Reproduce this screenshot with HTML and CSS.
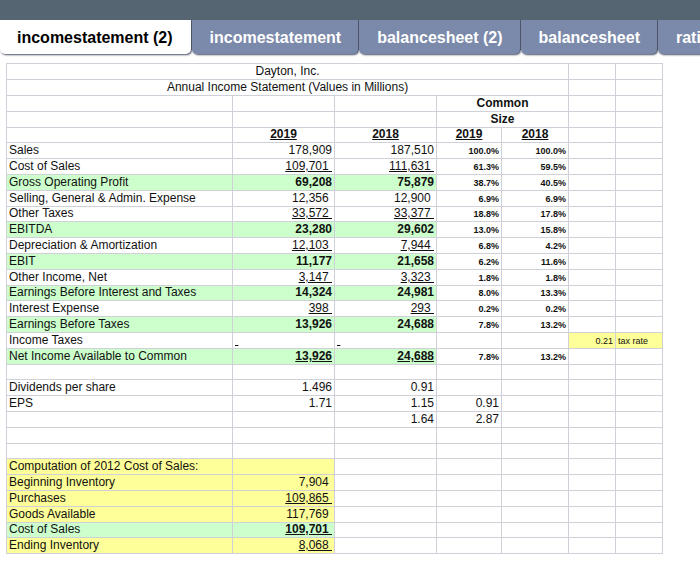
FILE: index.html
```html
<!DOCTYPE html>
<html lang="en">
<head>
<meta charset="utf-8">
<title>Dayton, Inc. Income Statement</title>
<link rel="stylesheet" href="styles.css">
</head>
<body>
<header class="topbar">
<nav class="tabs">
<button class="tab active" type="button">incomestatement (2)</button>
<button class="tab" type="button">incomestatement</button>
<button class="tab" type="button">balancesheet (2)</button>
<button class="tab" type="button">balancesheet</button>
<button class="tab" type="button">ratios</button>
</nav>
</header>
<main class="sheet">
<table>
<colgroup><col class="c-label"><col class="c-value"><col class="c-value"><col class="c-share"><col class="c-share2"><col class="c-note"><col class="c-note"></colgroup>
<tbody>
<tr><td colspan="5" class="mid">Dayton, Inc.</td><td></td><td></td></tr>
<tr><td colspan="5" class="mid">Annual Income Statement (Values in Millions)</td><td></td><td></td></tr>
<tr><td></td><td></td><td></td><th colspan="2">Common</th><td></td><td></td></tr>
<tr><td></td><td></td><td></td><th colspan="2">Size</th><td></td><td></td></tr>
<tr><td></td><th><u>2019</u></th><th><u>2018</u></th><th><u>2019</u></th><th><u>2018</u></th><td></td><td></td></tr>
<tr><td>Sales</td><td class="n">178,909</td><td class="n">187,510</td><td class="p">100.0%</td><td class="p">100.0%</td><td></td><td></td></tr>
<tr><td>Cost of Sales</td><td class="n"><u>109,701&nbsp;</u></td><td class="n"><u>111,631&nbsp;</u></td><td class="p">61.3%</td><td class="p">59.5%</td><td></td><td></td></tr>
<tr><td class="g">Gross Operating Profit</td><td class="g n b">69,208</td><td class="g n b">75,879</td><td class="p">38.7%</td><td class="p">40.5%</td><td></td><td></td></tr>
<tr><td>Selling, General &amp; Admin. Expense</td><td class="n">12,356&nbsp;</td><td class="n">12,900&nbsp;</td><td class="p">6.9%</td><td class="p">6.9%</td><td></td><td></td></tr>
<tr><td>Other Taxes</td><td class="n"><u>33,572&nbsp;</u></td><td class="n"><u>33,377&nbsp;</u></td><td class="p">18.8%</td><td class="p">17.8%</td><td></td><td></td></tr>
<tr><td class="g">EBITDA</td><td class="g n b">23,280</td><td class="g n b">29,602</td><td class="p">13.0%</td><td class="p">15.8%</td><td></td><td></td></tr>
<tr><td>Depreciation &amp; Amortization</td><td class="n"><u>12,103&nbsp;</u></td><td class="n"><u>7,944&nbsp;</u></td><td class="p">6.8%</td><td class="p">4.2%</td><td></td><td></td></tr>
<tr><td class="g">EBIT</td><td class="g n b">11,177</td><td class="g n b">21,658</td><td class="p">6.2%</td><td class="p">11.6%</td><td></td><td></td></tr>
<tr><td>Other Income, Net</td><td class="n"><u>3,147&nbsp;</u></td><td class="n"><u>3,323&nbsp;</u></td><td class="p">1.8%</td><td class="p">1.8%</td><td></td><td></td></tr>
<tr><td class="g">Earnings Before Interest and Taxes</td><td class="g n b">14,324</td><td class="g n b">24,981</td><td class="p">8.0%</td><td class="p">13.3%</td><td></td><td></td></tr>
<tr><td>Interest Expense</td><td class="n"><u>398&nbsp;</u></td><td class="n"><u>293&nbsp;</u></td><td class="p">0.2%</td><td class="p">0.2%</td><td></td><td></td></tr>
<tr><td class="g">Earnings Before Taxes</td><td class="g n b">13,926</td><td class="g n b">24,688</td><td class="p">7.8%</td><td class="p">13.2%</td><td></td><td></td></tr>
<tr><td>Income Taxes</td><td><u>&nbsp;</u></td><td><u>&nbsp;</u></td><td></td><td></td><td class="y s n">0.21</td><td class="y s">tax rate</td></tr>
<tr><td class="g">Net Income Available to Common</td><td class="g n b"><u>13,926</u></td><td class="g n b"><u>24,688</u></td><td class="p">7.8%</td><td class="p">13.2%</td><td></td><td></td></tr>
<tr><td></td><td></td><td></td><td></td><td></td><td></td><td></td></tr>
<tr><td>Dividends per share</td><td class="n">1.496</td><td class="n">0.91</td><td></td><td></td><td></td><td></td></tr>
<tr><td>EPS</td><td class="n">1.71</td><td class="n">1.15</td><td class="n">0.91</td><td></td><td></td><td></td></tr>
<tr><td></td><td></td><td class="n">1.64</td><td class="n">2.87</td><td></td><td></td><td></td></tr>
<tr><td></td><td></td><td></td><td></td><td></td><td></td><td></td></tr>
<tr><td></td><td></td><td></td><td></td><td></td><td></td><td></td></tr>
<tr><td class="y">Computation of 2012 Cost of Sales:</td><td class="y"></td><td></td><td></td><td></td><td></td><td></td></tr>
<tr><td class="y">Beginning Inventory</td><td class="y n">7,904&nbsp;</td><td></td><td></td><td></td><td></td><td></td></tr>
<tr><td class="y">Purchases</td><td class="y n"><u>109,865&nbsp;</u></td><td></td><td></td><td></td><td></td><td></td></tr>
<tr><td class="y">Goods Available</td><td class="y n">117,769&nbsp;</td><td></td><td></td><td></td><td></td><td></td></tr>
<tr><td class="g">Cost of Sales</td><td class="g n b"><u>109,701&nbsp;</u></td><td></td><td></td><td></td><td></td><td></td></tr>
<tr><td class="y">Ending Inventory</td><td class="y n"><u>8,068&nbsp;</u></td><td></td><td></td><td></td><td></td><td></td></tr>
</tbody>
</table>
</main>
</body>
</html>
```
FILE: styles.css
```css
body {
  margin: 0;
  background: #fff;
  color: #111;
  font-family: "Liberation Sans", Arial, sans-serif;
  overflow-x: hidden;
}

.topbar {
  padding-top: 20px;
  background: linear-gradient(#556672 0 50px, #fff 50px);
}

.tabs {
  display: flex;
  gap: 1px;
  overflow: hidden;
  padding-bottom: 4px;
}

.tab {
  flex: none;
  height: 34px;
  padding: 2px 17px 0 18px;
  border: 0;
  border-radius: 0 0 5px 5px;
  background: #7b89aa;
  box-shadow: 1px 1px 2px #4a5064;
  color: #fff;
  font: bold 16px "Liberation Sans", Arial, sans-serif;
}

.tab.active {
  padding: 2px 18px 0 17px;
  background: #fff;
  color: #000;
}

.sheet {
  padding: 5px 38px 14px 6px;
}

table {
  width: 100%;
  table-layout: fixed;
  border-collapse: collapse;
  font-size: 12px;
  line-height: 13px;
}

.c-label { width: 226px; }
.c-value { width: 102px; }
.c-share { width: 65px; }
.c-share2 { width: 67px; }
.c-note { width: 47px; }

tr { height: 16px; }
tr:nth-child(5n) { height: 15px; }

td,
th {
  padding: 0 2px 1px;
  border: 1px solid #d0d0d8;
  white-space: nowrap;
  vertical-align: bottom;
}

.mid { text-align: center; }
.n { text-align: right; }
.b { font-weight: bold; }
.g { background: #ccffcc; }
.y { background: #ffff99; }
.s { font-size: 9px; line-height: 11px; }

.p {
  font-size: 9px;
  line-height: 11px;
  font-weight: bold;
  text-align: right;
}
```
